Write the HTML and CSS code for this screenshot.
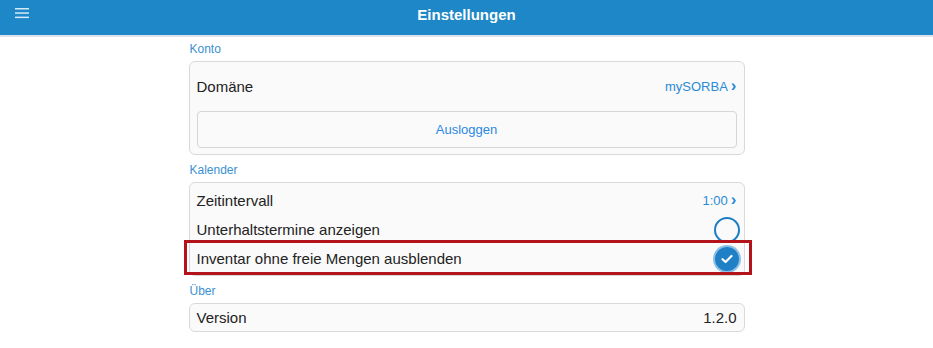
FILE: index.html
```html
<!DOCTYPE html>
<html lang="de">
<head>
  <meta charset="UTF-8" />
  <meta name="viewport" content="width=device-width, initial-scale=1.0"/>
  <title>Einstellungen</title>
  <link rel="stylesheet" href="styles.css">
</head>
<body>
  <header class="topbar">
    <button class="menu-btn" aria-label="Menü">
      <svg width="14" height="12" viewBox="0 0 14 12">
        <rect x="0" y="1" width="14" height="1.5" fill="#d6eaf7"/>
        <rect x="0" y="5.3" width="14" height="1.5" fill="#d6eaf7"/>
        <rect x="0" y="9.6" width="14" height="1.5" fill="#d6eaf7"/>
      </svg>
    </button>
    <h1>Einstellungen</h1>
  </header>

  <main class="settings">
    <div class="group-label">Konto</div>
    <div class="card card-account">
      <div class="row row-tall">
        <span>Domäne</span>
        <span class="value">mySORBA <span class="chev">&#x203A;</span></span>
      </div>
      <button class="logout">Ausloggen</button>
    </div>

    <div class="group-label">Kalender</div>
    <div class="card card-list">
      <div class="row">
        <span>Zeitintervall</span>
        <span class="value">1:00 <span class="chev">&#x203A;</span></span>
      </div>
      <div class="row">
        <span>Unterhaltstermine anzeigen</span>
        <span class="check"></span>
      </div>
      <div class="row highlighted">
        <span>Inventar ohne freie Mengen ausblenden</span>
        <span class="check checked">
          <svg width="12" height="10" viewBox="0 0 12 10">
            <path d="M1.5 5.2 L4.6 8 L10.5 2" fill="none" stroke="#fff" stroke-width="2.2" stroke-linecap="round" stroke-linejoin="round"/>
          </svg>
        </span>
      </div>
    </div>

    <div class="group-label">Über</div>
    <div class="card card-version">
      <div class="row row-short">
        <span>Version</span>
        <span class="plain">1.2.0</span>
      </div>
    </div>
  </main>
</body>
</html>
```

FILE: styles.css
```css
* { box-sizing: border-box; }

body {
  margin: 0;
  font-family: "Liberation Sans", Arial, sans-serif;
  color: #222;
  background: #fff;
}

.topbar {
  height: 37px;
  background: #1e87c8;
  border-bottom: 2px solid #dde3e8;
  display: flex;
  align-items: flex-start;
  justify-content: center;
  padding-top: 6px;
  position: relative;
}

.topbar h1 {
  margin: 0;
  color: #fff;
  font-size: 15px;
  line-height: 18px;
  font-weight: bold;
}

.menu-btn {
  position: absolute;
  left: 15px;
  top: 7px;
  padding: 0;
  border: none;
  background: none;
  display: flex;
}

.settings {
  width: 556px;
  margin: 0 auto;
}

.group-label {
  color: #3a91d2;
  font-size: 12px;
  padding: 5px 0 0 1px;
  height: 24px;
}

.card {
  background: #fafafa;
  border: 1px solid #d9d9d9;
  border-radius: 6px;
  padding: 0 7px;
  margin-bottom: 3px;
}

.card-account {
  padding: 6px 7px;
}

.card-list {
  padding: 3px 7px 2px;
}

.row {
  height: 29px;
  display: flex;
  align-items: center;
  justify-content: space-between;
  font-size: 15px;
  position: relative;
}

.row-tall {
  height: 37px;
  margin-bottom: 6px;
}

.row-short {
  height: 27px;
}

.value {
  color: #2a8ad6;
  font-size: 13px;
  display: flex;
  align-items: center;
  gap: 3px;
}

.chev {
  font-weight: bold;
  font-size: 17px;
  line-height: 1;
  margin-top: -3px;
}

.plain {
  font-size: 15px;
}

.logout {
  display: block;
  width: 100%;
  height: 37px;
  background: #fafafa;
  border: 1px solid #d6d6d6;
  border-radius: 4px;
  color: #2b88e3;
  font-family: inherit;
  font-size: 13px;
}

.check {
  width: 26px;
  height: 26px;
  border-radius: 50%;
  border: 2.5px solid #1c7fc5;
  margin-right: -3px;
  display: flex;
  align-items: center;
  justify-content: center;
}

.check.checked {
  width: 24px;
  height: 24px;
  margin-right: -2px;
  border: none;
  background: #1f80c6;
  box-shadow: 0 0 0 2px #8cc0e6;
}

.highlighted::after {
  content: "";
  position: absolute;
  left: -13px;
  right: -15px;
  top: -4px;
  bottom: -2px;
  border: 3px solid #b5131b;
  pointer-events: none;
}
```
